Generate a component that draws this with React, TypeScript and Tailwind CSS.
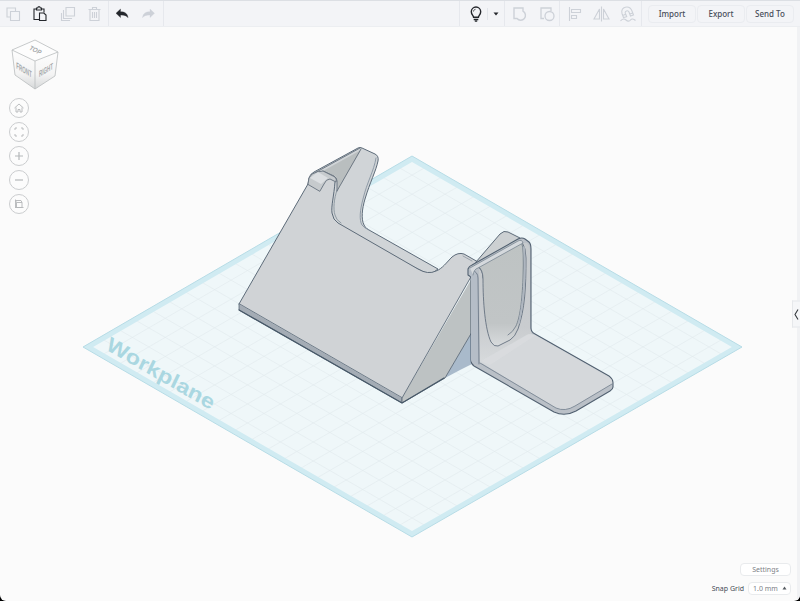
import React, { useState } from "react";
import clsx from "clsx";

const Divider = () => <div className="h-full w-px bg-[#e6e8ed]" />;

type ToolButtonProps = {
  label: string;
  active?: boolean;
  children: React.ReactNode;
};

const ToolButton = ({ label, active, children }: ToolButtonProps) => (
  <button
    aria-label={label}
    title={label}
    className={clsx(
      "flex h-full w-[27px] items-center justify-center",
      active ? "text-[#24272c]" : "text-[#cdd1d8]"
    )}
  >
    <svg width="18" height="18" viewBox="0 0 18 18" fill="none" stroke="currentColor" strokeWidth="1.1">
      {children}
    </svg>
  </button>
);

const TextButton = ({ children }: { children: React.ReactNode }) => (
  <button className="h-[18px] w-12 rounded-sm border border-[#eaecf0] text-[8px] leading-4 font-medium text-[#474d59]">
    {children}
  </button>
);

const Toolbar = () => (
  <header className="flex h-[27px] shrink-0 items-center justify-between border-t border-b border-t-[#dcdfe4] border-b-[#eceef1] bg-[#f3f4f7]">
    <div className="flex h-full items-center">
      <ToolButton label="Copy">
        <path d="M5 12H2V3h8.500v3M5.500 6.500h9v9h-9z" />
      </ToolButton>
      <ToolButton label="Paste" active>
        <path d="M7 14.500H2V4h2.500M9.500 4H12v3.500" />
        <path d="M4.500 3h1.200l.6-1.300h1.400L8.300 3h1.200v2h-5z" />
        <path d="M7.500 8h4.300l2.200 2v5.500H7.500z" />
      </ToolButton>
      <ToolButton label="Duplicate">
        <path d="M7 2.500h8.500V11H7zM5 5.500H4.500v8h8V13M3 8.500h-.500v7h8V15" />
      </ToolButton>
      <ToolButton label="Delete">
        <path d="M2.500 4.500h12M6.500 4.500v-2h4v2M4 4.500v11h9v-11M6.500 7v6M8.500 7v6M10.500 7v6" />
      </ToolButton>
      <Divider />
      <ToolButton label="Undo" active>
        <path d="M2 8.300 6.500 4v2.700c4.500 0 7 1.800 7.500 6-1.500-2-3.500-2.800-7.500-2.800v2.700z" fill="currentColor" strokeWidth="0.300" />
      </ToolButton>
      <ToolButton label="Redo">
        <path d="M13.500 8.300 9 4v2.700c-4.500 0-7 1.800-7.500 6 1.500-2 3.500-2.800 7.500-2.800v2.700z" fill="currentColor" strokeWidth="0.300" />
      </ToolButton>
      <Divider />
    </div>

    <div className="flex h-full items-center">
      <Divider />
      <ToolButton label="Show all" active>
        <path d="M8.600 12.300c0-1.600-2.300-2.600-2.300-5.600a4.700 4.700 0 0 1 9.400 0c0 3-2.300 4-2.300 5.600z" strokeWidth="1.400" />
        <path d="M8.700 14.500h4.600M9.800 16.200h2.400" strokeWidth="1.300" />
        <path d="M8.500 6.500c0-1.200.8-2 2-2.200" strokeWidth="0.800" />
      </ToolButton>
      <div className="h-3 w-px bg-[#e2e5ea]" />
      <button aria-label="Visibility options" className="flex h-full w-4 items-center justify-center text-[#24272c]">
        <svg width="6" height="4" viewBox="0 0 6 4" fill="currentColor">
          <path d="M.5.500h5L3 3.500z" />
        </svg>
      </button>
      <Divider />
      <ToolButton label="Group">
        <path d="M4 3h9v3.200a4.800 4.800 0 1 1-6 7.300H4z" strokeWidth="1.400" />
      </ToolButton>
      <ToolButton label="Ungroup">
        <path d="M7 13.500H4V3h10v3" strokeWidth="1.300" />
        <circle cx="12.500" cy="11" r="4.500" strokeWidth="1.300" />
      </ToolButton>
      <Divider />
      <ToolButton label="Align">
        <path d="M4.500 2v14M6.500 4.500h9v3h-9zM6.500 10.500h5v3h-5z" />
      </ToolButton>
      <ToolButton label="Mirror">
        <path d="M9.500 1.500v15M7.500 4v10H2zM11.500 4v10H17z" />
      </ToolButton>
      <ToolButton label="Cruise">
        <path d="M4.500 12.500 3 8.500C1 1.500 10.500-.5 13 6l1.500 4-3 1-1.500-4c-1-2.300-4.500-1-3.700 1.200l1.400 3.500zM3.700 10.500l3-1.200M10.800 9l3-1" />
        <path d="M1.500 16c2-2.500 4-2.500 5.500-1s3.500 1.500 4.500 0 3-1.500 5 .5" />
      </ToolButton>
      <Divider />
      <div className="flex items-center gap-px px-1.5">
        <TextButton>Import</TextButton>
        <TextButton>Export</TextButton>
        <TextButton>Send To</TextButton>
      </div>
    </div>
  </header>
);

const ViewCube = () => (
  <svg
    role="img"
    aria-label="View cube"
    className="h-[52px] w-[50px]"
    viewBox="-2 0 50 52"
    fontFamily="Liberation Sans, sans-serif"
    fontSize="9"
    fontWeight="bold"
    textAnchor="middle"
  >
    <defs>
      <linearGradient id="cubeSide" x1="0" y1="0" x2="0" y2="1">
        <stop offset="0" stopColor="#fdfdfd" />
        <stop offset="0.600" stopColor="#f4f4f4" />
        <stop offset="1" stopColor="#d6d8d9" />
      </linearGradient>
    </defs>
    <path d="M1 11 24 22v28L4 36z" fill="url(#cubeSide)" />
    <path d="M47 13 24 22v28l20-13z" fill="url(#cubeSide)" />
    <path d="M1 11 24 1l23 12-23 9z" fill="#fdfdfd" />
    <path d="M1 11 24 1l23 12-3 24-20 13L4 36zM1 11l23 11 23-9M24 22v28" fill="none" stroke="#b9bcbe" strokeWidth="0.800" strokeLinejoin="round" />
    <g fill="#a5a9ab">
      <text transform="matrix(.6 .3 -.45 .6 23 13)">TOP</text>
      <text transform="matrix(.5 .3 0 1 13 34)">FRONT</text>
      <text transform="matrix(.5 -.3 0 1 35 34)">RIGHT</text>
    </g>
  </svg>
);

const NavButton = ({ label, children }: { label: string; children: React.ReactNode }) => (
  <button
    aria-label={label}
    title={label}
    className="flex size-5 items-center justify-center rounded-full border border-[#cbcdcf] bg-[#fcfcfc] text-[#b4b7b9]"
  >
    <svg width="12" height="12" viewBox="0 0 12 12" fill="none" stroke="currentColor" strokeWidth="0.900">
      {children}
    </svg>
  </button>
);

const ViewControls = () => (
  <nav aria-label="View controls" className="absolute top-3 left-[9px] flex flex-col gap-[7px]">
    <ViewCube />
    <div className="flex flex-col gap-1">
      <NavButton label="Home view">
        <path d="M1.500 6 6 2l4.500 4M3 5.500V10h2V7.500h2V10h2V5.500" />
      </NavButton>
      <NavButton label="Fit all in view">
        <path d="M2 4V2h2M8 2h2v2M10 8v2H8M4 10H2V8" />
      </NavButton>
      <NavButton label="Zoom in">
        <path d="M6 2v8M2 6h8" strokeWidth="1.200" />
      </NavButton>
      <NavButton label="Zoom out">
        <path d="M2 6h8" strokeWidth="1.200" />
      </NavButton>
      <NavButton label="Switch to flat view">
        <path d="M3.500 4.500h5.500v5H3.500zM2 9.500h8.500M3.500 4.500 2.500 2.500M2.500 1.500v8M2.500 2.500h5.500L9 4.500" />
      </NavButton>
    </div>
  </nav>
);

// Workplane corners: left (83,347), top (412,156), right (742,347), bottom (412,537)
const steps = Array.from({ length: 19 }, (_, i) => (i + 1) / 20);

const Workplane = () => (
  <g>
    <path d="M83 347 412 156 742 347 412 537z" fill="#eff7f9" />
    <g stroke="#e0eaed" strokeWidth="0.600">
      {steps.map((t) => (
        <g key={t}>
          <line x1={83 + 329 * t} y1={347 - 191 * t} x2={412 + 330 * t} y2={537 - 190 * t} />
          <line x1={83 + 329 * t} y1={347 + 190 * t} x2={412 + 330 * t} y2={156 + 191 * t} />
        </g>
      ))}
    </g>
    <path d="M88 347 412 159 737 347 412 534z" fill="none" stroke="#d0ebf2" strokeWidth="5" />
    <path d="M83 347 412 156 742 347 412 537z" fill="none" stroke="#b7dce6" strokeWidth="1" />
    <text
      transform="matrix(.866 .5 -.36 .76 105 349)"
      fontFamily="Liberation Sans, sans-serif"
      fontSize="24"
      fontWeight="bold"
      fill="#aad7e1"
    >
      Workplane
    </text>
  </g>
);

const Wedge = () => (
  <g strokeLinejoin="round" strokeLinecap="round">
    {/* shadow between the two parts */}
    <path d="M445 378 472 332v32l-12 6z" fill="#a9bacb" />
    {/* back arm and slot wall */}
    <path
      d="M308 184 309 178Q310 174 314 172L358 148Q360 147 362 148L375 154Q379 156 378 161C376 171 370 182 365 199C362 209 361 219 364 225Q365 228 369 230L438 269 430 275 330 226z"
      fill="#d0d4d7"
      stroke="#5d6b79"
      strokeWidth="1"
    />
    <path d="M376 158C374 171 367 182 363 199C360 210 359 220 362 225Q364 228 369 230" fill="none" stroke="#8794a1" strokeWidth="0.900" />
    {/* recess under the top edge */}
    <path d="M323 171 361 150 337 191 337 179 335 176z" fill="#b9bebf" />
    <path d="M311 175 360 148M361 149 337 191M323 171l11 5Q337 178 337 181v10" fill="none" stroke="#65717d" strokeWidth="0.900" />
    {/* front face */}
    <path
      d="M239 304 308 184 320 191 324 184Q326 179 330 179 335 180 335 186C334 196 331 206 332 213Q333 220 338 223L418 269Q428 275 436 271C442 269 447 262 452 257Q458 252 464 254L478 262 470 279 402 398z"
      fill="#d0d3d6"
    />
    <path
      d="M239 304 308 184M335 182C334 196 331 206 332 213Q333 220 338 223L418 269Q428 275 436 271C442 269 447 262 452 257Q458 252 464 254L478 262"
      fill="none"
      stroke="#5d6b79"
      strokeWidth="1"
    />
    <path d="M337 190C334 199 333 209 335 215Q336 220 341 223" fill="none" stroke="#7f8b96" strokeWidth="0.800" />
    {/* hook */}
    <path d="M308 184 309 178Q311 173 317 172L323 171 335 177Q337 179 336 182L330 179Q326 179 324 184L320 191z" fill="#c6cacd" stroke="#65717d" strokeWidth="0.900" />
    <path d="M310 178 321 184 328 178 318 172z" fill="#dcdfe2" />
    {/* bottom band */}
    <path d="M239 304v6l163 93v-5z" fill="#a4acb5" stroke="#586776" strokeWidth="0.800" />
    {/* right side */}
    <path d="M402 398v5l43-25 27-46v-54z" fill="#bdc2c3" />
    <path d="M472 275 402 398v5l43-25 27-46" fill="none" stroke="#5d6b79" strokeWidth="0.900" />
    <path d="M239 310l163 93 42-25" fill="none" stroke="#475868" strokeWidth="1.200" />
    <path d="M463 256 472 261" stroke="#8b96a0" strokeWidth="0.800" />
  </g>
);

const Bracket = () => (
  <g strokeLinejoin="round" strokeLinecap="round">
    <path d="M476 262 500 234Q504 230 508 232L520 238v8l-42 22z" fill="#ccd0d2" stroke="#5d6b79" strokeWidth="1" />
    {/* outer body */}
    <path
      d="M468 275v-6Q469 266 472 265L518 239Q522 237 525 239L529 242Q531 244 531 249V328Q531 332 535 334L609 376Q613 379 613 383V387Q613 389 610 391L576 411Q565 417 554 412L474 366Q471 364 471 360V277z"
      fill="#bac0c7"
      stroke="#526171"
      strokeWidth="1.100"
    />
    {/* upright face */}
    <path d="M479 270 523 243 527 243Q530 246 530 250V329L532 334 480 363z" fill="url(#uprightFade)" />
    {/* base plate */}
    <path d="M480 362 527 335Q531 333 535 335L609 377Q613 380 612 384L575 406Q565 412 556 408z" fill="#d5d8db" />
    <path d="M480 363 556 408Q565 412 575 406L612 384" fill="none" stroke="#7b8794" strokeWidth="0.900" />
    <path d="M481 361 528 334 536 335 490 365z" fill="#dfe2e4" opacity="0.400" />
    {/* left rim */}
    <path d="M471 277V360Q471 364 479 365L478 276Q477 271 473 270L469 271z" fill="#b5bdc7" />
    <path d="M479 364 478 278Q478 272 472 270M475 266Q483 267 483 278" fill="none" stroke="#6e7b89" strokeWidth="0.900" />
    {/* recessed panel */}
    <path
      d="M478 266 522 242Q526 248 526 258C526 287 525 309 518 329Q515 337 510 340L498 346Q494 347 491 342C485 329 483 302 483 279Q483 270 478 266z"
      fill="url(#panelFade)"
      stroke="#657280"
      strokeWidth="0.900"
    />
    <path d="M522 244Q524 249 523 278C522 302 520 317 516 326Q513 332 508 335" fill="none" stroke="#75818d" strokeWidth="0.900" />
    <path d="M524 247Q527 285 519 323" fill="none" stroke="#aeb6c0" strokeWidth="1.600" />
    <path d="M470 268 518 241Q522 239 523 243L478 268Q474 269 473 275" fill="#d5d9dd" stroke="#7a8692" strokeWidth="0.800" />
  </g>
);

const Scene = () => (
  <svg
    role="img"
    aria-label="3D design on the workplane"
    className="size-full"
    viewBox="0 27 800 574"
    preserveAspectRatio="xMidYMid meet"
  >
    <defs>
      <linearGradient id="uprightFade" x1="0" y1="0" x2="0" y2="1">
        <stop offset="0" stopColor="#c6cacd" />
        <stop offset="0.700" stopColor="#c9cccf" />
        <stop offset="1" stopColor="#d7dadc" />
      </linearGradient>
      <linearGradient id="panelFade" x1="0" y1="0" x2="0" y2="1">
        <stop offset="0" stopColor="#bec3c3" />
        <stop offset="0.780" stopColor="#c1c5c6" />
        <stop offset="1" stopColor="#d8dbdd" />
      </linearGradient>
    </defs>
    <Workplane />
    <Wedge />
    <Bracket />
  </svg>
);

const SnapSettings = () => {
  const [snap, setSnap] = useState("1.0 mm");

  return (
    <div className="absolute right-1.5 bottom-1.5 flex flex-col items-end gap-1.5 text-[7px] leading-3 text-[#7d8187]">
      <button className="h-[13px] w-[51px] rounded-sm border border-[#e9ebed] bg-white leading-none">Settings</button>
      <div className="flex items-center gap-1">
        <label htmlFor="snap-grid" className="text-[#454b55]">
          Snap Grid
        </label>
        <div className="relative">
          <select
            id="snap-grid"
            value={snap}
            onChange={(e) => setSnap(e.target.value)}
            className="block h-[13px] w-[43px] appearance-none rounded-sm border border-[#e9ebed] bg-white pl-1 leading-none"
          >
            <option>0.1 mm</option>
            <option>0.5 mm</option>
            <option>1.0 mm</option>
            <option>2.0 mm</option>
          </select>
          <svg className="pointer-events-none absolute top-1 right-1" width="5" height="4" viewBox="0 0 5 4" fill="#555a60">
            <path d="M2.500.500 4.500 3.500h-4z" />
          </svg>
        </div>
      </div>
    </div>
  );
};

export default function App() {
  return (
    <div className="h-screen bg-black font-['Noto_Sans',sans-serif]">
      <div className="flex h-full flex-col overflow-hidden rounded-b-md bg-[#fbfbfb]">
        <Toolbar />
        <main className="relative min-h-0 flex-1 border-r-[3px] border-[#f1f2f4]">
          <div className="-mr-[3px] h-full">
            <Scene />
          </div>
          <ViewControls />
          <SnapSettings />
          <button
            aria-label="Open shapes panel"
            className="absolute top-1/2 -right-[3px] flex h-[27px] w-2 -translate-y-1/2 items-center justify-center border border-r-0 border-[#e6e8eb] bg-[#f5f6f8] text-[#34383d]"
          >
            <svg width="5" height="12" viewBox="0 0 5 12" fill="none" stroke="currentColor" strokeWidth="1.100">
              <path d="M4 1 1 6l3 5" />
            </svg>
          </button>
        </main>
      </div>
    </div>
  );
}
